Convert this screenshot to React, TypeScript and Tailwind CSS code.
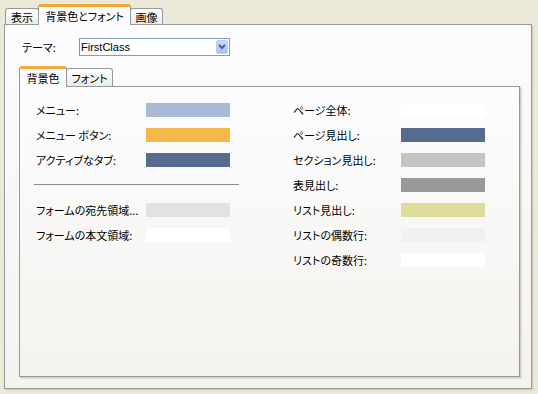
import React from 'react';

const jp = "font-['Noto_Sans_CJK_JP','Noto_Sans',sans-serif] [font-feature-settings:'palt'] text-[11px] leading-[14px]";

type Row = { label: string; color: string };

const leftTop: Row[] = [
  { label: 'メニュー:', color: 'bg-[#AAB9D6]' },
  { label: 'メニュー ボタン:', color: 'bg-[#F5B94B]' },
  { label: 'アクティブなタブ:', color: 'bg-[#566B8F]' },
];

const leftBottom: Row[] = [
  { label: 'フォームの宛先領域...', color: 'bg-[#E2E2E2]' },
  { label: 'フォームの本文領域:', color: 'bg-white' },
];

const right: Row[] = [
  { label: 'ページ全体:', color: 'bg-white' },
  { label: 'ページ見出し:', color: 'bg-[#566B8F]' },
  { label: 'セクション見出し:', color: 'bg-[#C4C4C4]' },
  { label: '表見出し:', color: 'bg-[#999999]' },
  { label: 'リスト見出し:', color: 'bg-[#DEDC9C]' },
  { label: 'リストの偶数行:', color: 'bg-[#F1F1F1]' },
  { label: 'リストの奇数行:', color: 'bg-white' },
];

const ColorRow = ({ row, labelWidth }: { row: Row; labelWidth: string }) => (
  <div className="flex items-center h-[14px]">
    <span className={`${jp} ${labelWidth} whitespace-nowrap`}>{row.label}</span>
    <div className={`w-[84px] h-[14px] ${row.color}`} />
  </div>
);

const Tab = ({
  label,
  selected,
  width,
  tall,
  short,
}: {
  label: string;
  selected?: boolean;
  width: string;
  tall: string;
  short: string;
}) =>
  selected ? (
    <div
      className={`${width} ${tall} relative z-10 -mb-px -mx-px flex items-center justify-center rounded-t-[3px] border border-b-0 border-[#919B9C] border-t-[3px] border-t-[#F2A93B] bg-[#FCFCFE] ${jp}`}
    >
      {label}
    </div>
  ) : (
    <div
      className={`${width} ${short} flex items-center justify-center rounded-t-[3px] border border-b-0 border-[#919B9C] bg-gradient-to-b from-white to-[#ECEBE5] ${jp}`}
    >
      {label}
    </div>
  );

export default function App() {
  return (
    <div className="w-[538px] h-[394px] bg-[#ECE9D8] pt-[4px] pl-[4px] pr-[6px] pb-[5px] flex flex-col text-black">
      <div className="flex items-end h-[20px] pl-[1px]">
        <Tab label="表示" width="w-[34px]" tall="h-[21px]" short="h-[16px]" />
        <Tab label="背景色とフォント" selected width="w-[93px]" tall="h-[21px]" short="h-[16px]" />
        <Tab label="画像" width="w-[33px]" tall="h-[21px]" short="h-[16px]" />
      </div>

      <div className="flex-1 flex flex-col border border-[#919B9C] bg-gradient-to-b from-[#FCFCFE] to-[#F4F3EE] shadow-[1px_1px_0_#D3D0C1,2px_2px_0_#E2DFD0] pt-[13px] pl-[14px] pr-[11px] pb-[11px]">
        <div className="flex items-center h-[18px] pl-[3px]">
          <span className={`${jp} w-[57px]`}>テーマ:</span>
          <div className="w-[151px] h-[18px] border border-[#7F9DB9] bg-white flex items-center pl-[1px] pr-[1px]">
            <span className="flex-1 font-['Liberation_Sans',sans-serif] text-[11px] leading-[14px]">FirstClass</span>
            <div className="w-[12px] h-[14px] rounded-[2px] bg-gradient-to-b from-[#C6D6FC] to-[#A8C1F6] border border-[#B9CDF6] flex items-center justify-center">
              <svg width="8" height="6" viewBox="0 0 8 6">
                <polyline points="1,1 4,4 7,1" fill="none" stroke="#4D6185" strokeWidth="2" />
              </svg>
            </div>
          </div>
        </div>

        <div className="flex items-end h-[20px] mt-[10px] pl-[1px]">
          <Tab label="背景色" selected width="w-[48px]" tall="h-[21px]" short="h-[18px]" />
          <Tab label="フォント" width="w-[47px]" tall="h-[21px]" short="h-[18px]" />
        </div>

        <div className="flex-1 flex border border-[#919B9C] bg-gradient-to-b from-[#FCFCFE] to-[#F4F3EE] shadow-[1px_1px_0_#D3D0C1,2px_2px_0_#E2DFD0] pt-[16px] pl-[16px]">
          <div className="w-[257px] flex flex-col">
            <div className="flex flex-col gap-[11px]">
              {leftTop.map((r) => (
                <ColorRow key={r.label} row={r} labelWidth="w-[110px]" />
              ))}
            </div>
            <div className="-ml-[2px] w-[205px] h-px bg-[#8E8E8E] mt-[17px] mb-[18px]" />
            <div className="flex flex-col gap-[11px]">
              {leftBottom.map((r) => (
                <ColorRow key={r.label} row={r} labelWidth="w-[110px]" />
              ))}
            </div>
          </div>
          <div className="flex flex-col gap-[11px]">
            {right.map((r) => (
              <ColorRow key={r.label} row={r} labelWidth="w-[108px]" />
            ))}
          </div>
        </div>
      </div>
    </div>
  );
}
